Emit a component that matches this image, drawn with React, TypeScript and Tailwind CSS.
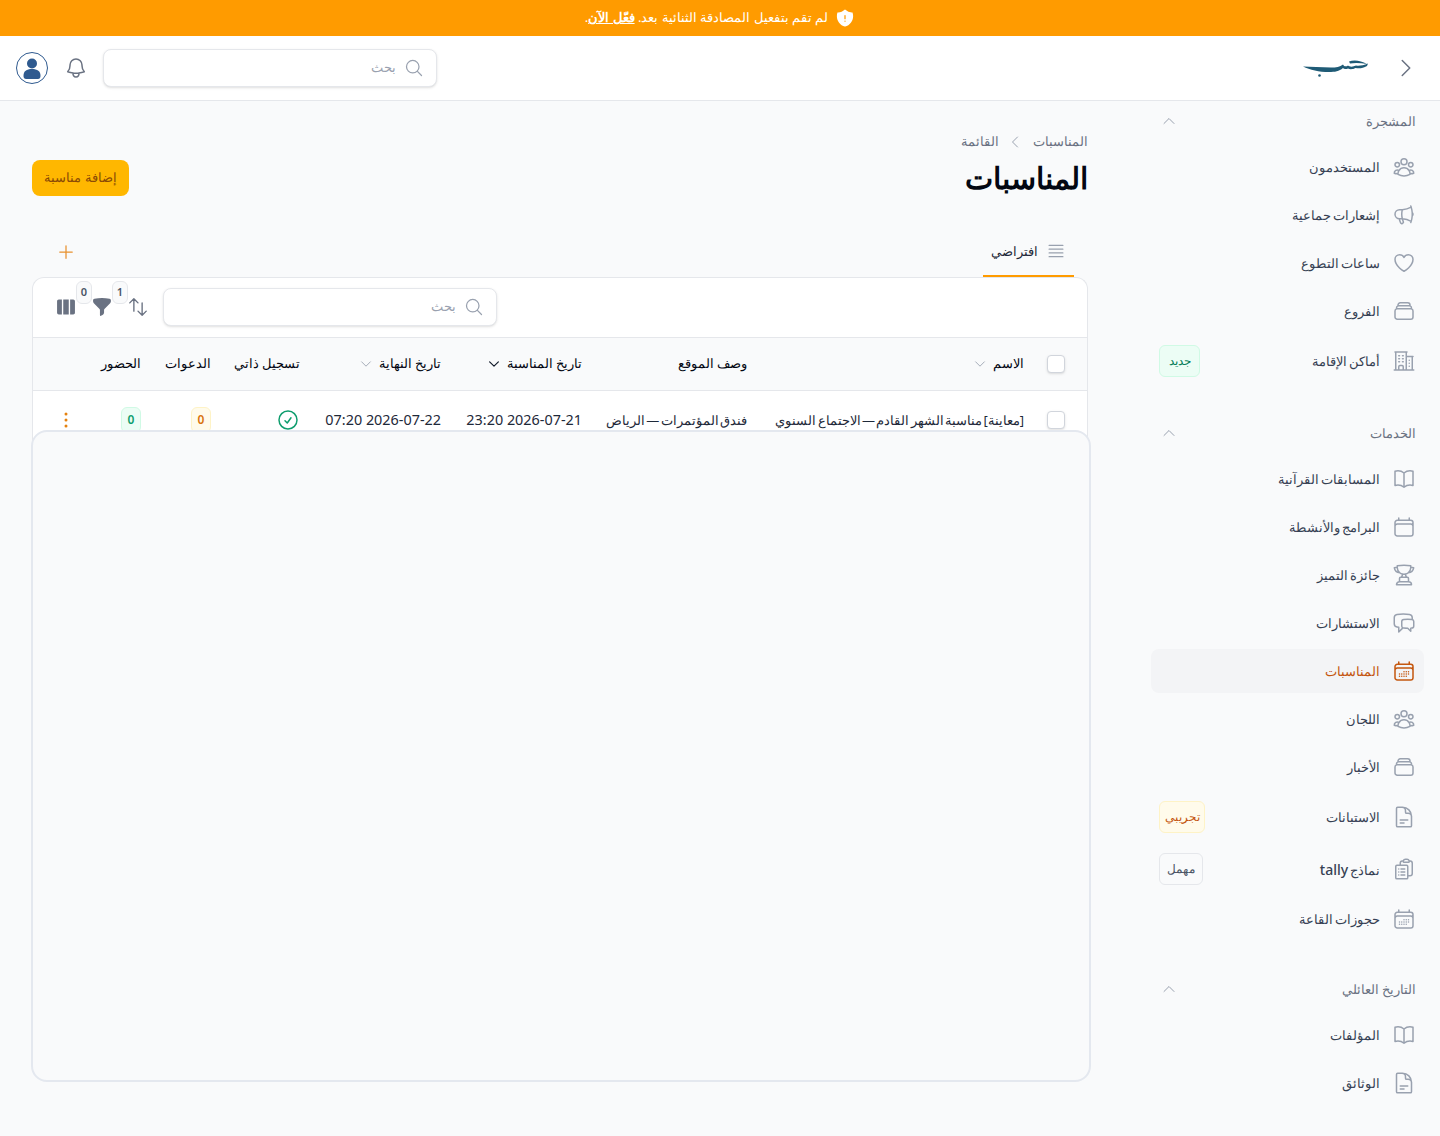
import type { ComponentType, ReactNode } from 'react'
import {
  HiOutlineUserGroup,
  HiOutlineMegaphone,
  HiOutlineHeart,
  HiOutlineRectangleStack,
  HiOutlineBuildingOffice2,
  HiOutlineBookOpen,
  HiOutlineCalendar,
  HiOutlineTrophy,
  HiOutlineChatBubbleLeftRight,
  HiOutlineCalendarDays,
  HiOutlineDocumentText,
  HiOutlineClipboardDocumentList,
  HiOutlineBell,
  HiOutlineMagnifyingGlass,
  HiOutlineChevronRight,
  HiOutlineChevronLeft,
  HiOutlineChevronUp,
  HiOutlineChevronDown,
  HiOutlineArrowsUpDown,
  HiOutlinePlus,
  HiOutlineBars4,
  HiOutlineCheckCircle,
  HiEllipsisVertical,
  HiShieldExclamation,
  HiFunnel,
  HiViewColumns,
} from 'react-icons/hi2'

type Icon = ComponentType<{ className?: string }>
type NavItem = { label: ReactNode; key: string; icon: Icon; active?: boolean; badge?: ReactNode }

const Badge = ({ label, className }: { label: string; className: string }) => (
  <span className={`flex h-8 items-center justify-center whitespace-nowrap rounded-md border text-[11.5px] ${className}`}>{label}</span>
)

const item = (label: string, icon: Icon, extra?: Partial<NavItem>): NavItem => ({ label, key: label, icon, ...extra })

const sections: { title: string; items: NavItem[] }[] = [
  {
    title: 'المشجرة',
    items: [
      item('المستخدمون', HiOutlineUserGroup),
      item('إشعارات جماعية', HiOutlineMegaphone),
      item('ساعات التطوع', HiOutlineHeart),
      item('الفروع', HiOutlineRectangleStack),
      item('أماكن الإقامة', HiOutlineBuildingOffice2, {
        badge: <Badge label="جديد" className="w-[41px] border-emerald-100 bg-emerald-50 text-emerald-700" />,
      }),
    ],
  },
  {
    title: 'الخدمات',
    items: [
      item('المسابقات القرآنية', HiOutlineBookOpen),
      item('البرامج والأنشطة', HiOutlineCalendar),
      item('جائزة التميز', HiOutlineTrophy),
      item('الاستشارات', HiOutlineChatBubbleLeftRight),
      item('المناسبات', HiOutlineCalendarDays, { active: true }),
      item('اللجان', HiOutlineUserGroup),
      item('الأخبار', HiOutlineRectangleStack),
      item('الاستبانات', HiOutlineDocumentText, {
        badge: <Badge label="تجريبي" className="w-[46px] border-amber-100 bg-amber-50 text-[#c4570f]" />,
      }),
      item('نماذج tally', HiOutlineClipboardDocumentList, {
        label: <>نماذج <span className="text-sm">tally</span></>,
        badge: <Badge label="مهمل" className="w-11 border-gray-200 bg-gray-50 text-gray-600" />,
      }),
      item('حجوزات القاعة', HiOutlineCalendarDays),
    ],
  },
  {
    title: 'التاريخ العائلي',
    items: [
      item('المؤلفات', HiOutlineBookOpen),
      item('الوثائق', HiOutlineDocumentText),
    ],
  },
]

const SearchBox = () => (
  <div className="flex h-[38px] w-[334px] items-center gap-2 rounded-lg border border-gray-200 bg-white px-3 shadow-sm">
    <HiOutlineMagnifyingGlass className="size-5 text-gray-400" />
    <span className="text-[13px] text-gray-400">بحث</span>
  </div>
)

const Sidebar = () => (
  <aside className="flex w-80 shrink-0 flex-col gap-7 pl-[31px] pr-4">
    {sections.map((section) => (
      <div key={section.title} className="flex flex-col gap-1">
        <div className="flex h-10 items-center justify-between px-2">
          <span className="pt-px text-[13px] text-gray-500">{section.title}</span>
          <HiOutlineChevronUp className="mx-0.5 size-4 text-gray-400" />
        </div>
        {section.items.map((nav) => (
          <div
            key={nav.key}
            className={`flex items-center gap-3 rounded-lg px-2 text-[13px] font-medium [word-spacing:-1.5px] ${nav.badge ? 'h-12' : 'h-11'} ${nav.active ? 'bg-gray-100 text-[#c4570f]' : 'text-gray-700'}`}
          >
            <nav.icon className={`size-6 shrink-0 ${nav.active ? 'text-[#c4570f]' : 'text-gray-400'}`} />
            <span className="flex-1 pt-0.5">{nav.label}</span>
            {nav.badge}
          </div>
        ))}
      </div>
    ))}
  </aside>
)

const HeaderCell = ({ label, sort }: { label: string; sort?: 'on' | 'off' }) => (
  <th className="px-3 pb-px text-right text-[13px] font-medium text-gray-950">
    <span className="flex items-center gap-1.5 whitespace-nowrap">
      {label}
      {sort && (
        <HiOutlineChevronDown className={`size-3.5 ${sort === 'on' ? 'stroke-2 text-gray-900' : 'text-gray-400'}`} />
      )}
    </span>
  </th>
)

const Checkbox = () => <div className="mx-auto size-[18px] rounded border border-gray-300 bg-white shadow-sm" />

const CountBadge = ({ className }: { className: string }) => (
  <span className={`flex h-[26px] w-5 items-center justify-center rounded-md border text-xs font-semibold ${className}`}>0</span>
)

const ToolIcon = ({ icon: Glyph, count }: { icon: Icon; count?: string }) => (
  <span className="relative">
    <Glyph className="size-[22px]" />
    {count && (
      <span className="absolute -left-[15px] -top-[15px] flex h-[23px] w-4 items-center justify-center rounded-md border border-gray-200 bg-gray-50 text-[11px] font-semibold text-gray-600">{count}</span>
    )}
  </span>
)

const EventsTable = () => (
  <table className="w-full table-fixed border-collapse">
    <colgroup>
      <col className="w-[51px]" />
      <col className="w-[277px]" />
      <col className="w-[165px]" />
      <col className="w-[141px]" />
      <col className="w-[141px]" />
      <col className="w-[89px]" />
      <col className="w-[70px]" />
      <col />
    </colgroup>
    <thead className="bg-gray-50">
      <tr className="h-[53px] border-y border-gray-200">
        <th className="pr-[11px]"><Checkbox /></th>
        <HeaderCell label="الاسم" sort="off" />
        <HeaderCell label="وصف الموقع" />
        <HeaderCell label="تاريخ المناسبة" sort="on" />
        <HeaderCell label="تاريخ النهاية" sort="off" />
        <HeaderCell label="تسجيل ذاتي" />
        <HeaderCell label="الدعوات" />
        <HeaderCell label="الحضور" />
        <th />
      </tr>
    </thead>
    <tbody className="text-gray-800">
      <tr className="h-[58px]">
        <td className="pr-[11px]"><Checkbox /></td>
        <td className="whitespace-nowrap px-3 pt-0.5 text-[13px] [word-spacing:-2px]">[معاينة] مناسبة الشهر القادم — الاجتماع السنوي</td>
        <td className="whitespace-nowrap px-3 pt-0.5 text-[13px] [word-spacing:-2px]">فندق المؤتمرات — الرياض</td>
        <td className="whitespace-nowrap px-3 text-[14.4px]">2026-07-21 23:20</td>
        <td className="whitespace-nowrap px-3 text-[14.4px]">2026-07-22 07:20</td>
        <td className="px-3"><HiOutlineCheckCircle className="size-6 text-[#0f9d6e]" /></td>
        <td className="px-3"><CountBadge className="border-amber-100 bg-amber-50 text-[#d9730d]" /></td>
        <td className="px-3"><CountBadge className="border-emerald-100 bg-emerald-50 text-[#0f9d6e]" /></td>
        <td className="pl-[21px]"><HiEllipsisVertical className="mr-auto size-6 text-[#e5820f]" /></td>
      </tr>
    </tbody>
  </table>
)

const Main = () => (
  <main className="relative min-w-0 flex-1 px-8 pt-[33px]">
    <div className="flex h-4 items-center gap-2.5 text-[13px] text-gray-500">
      <span>المناسبات</span>
      <HiOutlineChevronLeft className="size-4 text-gray-400" />
      <span className="-mr-0.5">القائمة</span>
    </div>
    <div className="mt-2.5 flex items-center justify-between">
      <h1 className="h-9 text-[29.5px] leading-9 font-bold text-gray-950">المناسبات</h1>
      <button className="flex h-9 w-[97px] items-center justify-center rounded-lg bg-[#ffb700] text-[13px] font-medium text-[#8a4a06]">إضافة مناسبة</button>
    </div>
    <div className="mt-[31px] flex h-[50px] items-center justify-between">
      <div className="mr-[14px] flex h-full w-[91px] items-center gap-2 border-b-2 border-[#ff9b00] pr-2 text-[12.5px] font-medium text-gray-800">
        <HiOutlineBars4 className="size-5 text-gray-400" />
        <span className="pt-0.5">افتراضي</span>
      </div>
      <HiOutlinePlus className="ml-6 size-5 text-[#e8912f]" />
    </div>
    <div className="h-[300px] overflow-hidden rounded-t-xl border-x border-t border-gray-200 bg-white">
      <div className="flex h-[59px] items-center justify-between pb-px pl-[22px] pr-[590px]">
        <SearchBox />
        <div className="flex items-center gap-[14px] text-gray-500">
          <ToolIcon icon={HiOutlineArrowsUpDown} count="1" />
          <ToolIcon icon={HiFunnel} count="0" />
          <ToolIcon icon={HiViewColumns} />
        </div>
      </div>
      <EventsTable />
    </div>
    {/* panel lying over the lower table */}
    <div className="absolute left-[31px] top-[329px] h-[652px] w-[1060px] rounded-2xl border-2 border-[#e4e8ef] bg-gray-50" />
  </main>
)

export default function App() {
  return (
    <div dir="rtl" className="flex h-[1136px] flex-col overflow-hidden bg-gray-50 font-['Noto_Sans',sans-serif]">
      <div className="flex h-9 items-center justify-center gap-[7px] bg-[#ff9b00] text-[13px] text-white">
        <HiShieldExclamation className="size-5" />
        <span>لم تقم بتفعيل المصادقة الثنائية بعد. <a className="font-semibold underline">فعّل الآن</a>.</span>
      </div>
      <header className="flex h-[65px] items-center justify-between border-b border-gray-200 bg-white pl-4 pr-[22px]">
        <div className="flex items-center gap-[26px]">
          <HiOutlineChevronRight className="size-6 text-gray-500" />
          <svg viewBox="0 0 65 20" className="h-5 w-[65px]" fill="#1f5b76">
            <path d="M0 8.500C8 8.500 18 9.500 28 9.500C33 9.500 37 9 40 6.500C41 8.500 43 9 45 7.500C46.500 9 50 9 53 7.500C56 8 60 7.500 65 5.500L64 8C60 10.500 56 10.500 52.500 10C50 11.500 46.500 11.500 45 10.500C43 11.500 41 11 40 10C36 13.500 32 14 26 14C16 14 7 12 0 8.500Z" />
            <path d="M46 3.500C51 1.500 58 2.500 64 6C58 5 52 4.500 47 5.500Z" />
            <circle cx="16.500" cy="17.500" r="1.300" />
          </svg>
        </div>
        <div className="flex items-center gap-4">
          <SearchBox />
          <HiOutlineBell className="-mr-px size-6 text-gray-500" />
          <svg viewBox="0 0 32 32" className="size-8">
            <circle cx="16" cy="16" r="15.500" fill="#fff" stroke="#2f5a8f" />
            <circle cx="16" cy="11.500" r="5" fill="#2f5a8f" />
            <path d="M7.500 24c0-5 3-7 8.500-7s8.500 2 8.500 7c0 2-1 3-2.500 3h-12c-1.500 0-2.500-1-2.500-3z" fill="#2f5a8f" />
          </svg>
        </div>
      </header>
      <div className="flex flex-1">
        <Sidebar />
        <Main />
      </div>
    </div>
  )
}
